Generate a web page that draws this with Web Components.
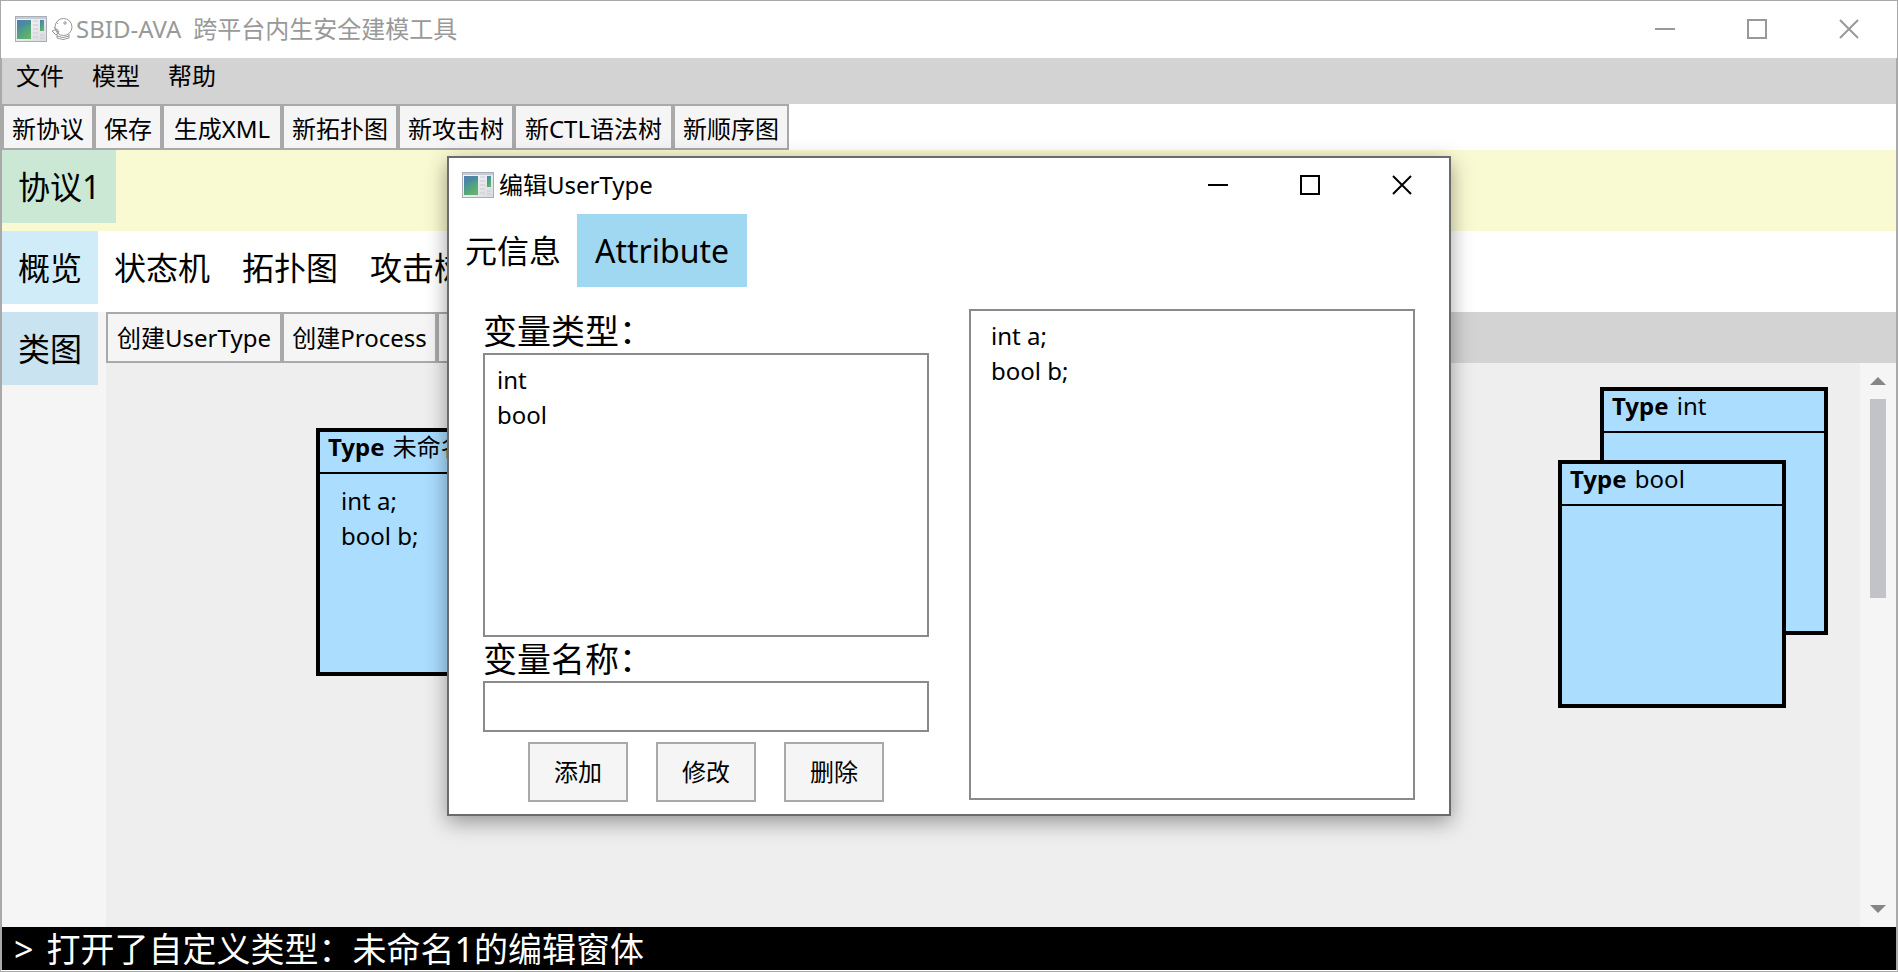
<!DOCTYPE html>
<html lang="zh-CN">
<head>
<meta charset="utf-8">
<title>SBID-AVA</title>
<style>
html,body{margin:0;height:100%}
body{font-family:"Noto Sans","Noto Sans CJK SC",sans-serif;color:#000;background:#fff;overflow:hidden}
</style>
</head>
<body>
<sbid-app></sbid-app>
<script>
const define = (name, html, setup) => {
  const t = document.createElement('template');
  t.innerHTML = html;
  customElements.define(name, class extends HTMLElement {
    constructor() {
      super();
      this.attachShadow({mode: 'open'}).append(t.content.cloneNode(true));
    }
    connectedCallback() { if (setup) setup(this, this.shadowRoot); }
  });
};

/* Window caption: application icon, title, and the three system buttons */
define('win-caption', `
<style>
:host{display:flex;align-items:center;flex:none;background:#fff;color:var(--caption,#000);font-size:24px;line-height:32px}
.app{flex:none;margin-right:5px}
.title{flex:1;display:flex;align-items:center;white-space:nowrap}
.controls{display:flex}
button{border:0;padding:0;margin:0;background:none;color:inherit;width:92px;height:48px;display:grid;place-items:center}
.controls svg{display:block}
</style>
<svg class="app" width="32" height="26" viewBox="0 0 32 26" aria-hidden="true">
<defs>
<linearGradient id="f" x1="0" y1="0" x2="1" y2="1"><stop offset="0" stop-color="#fbfbfc"/><stop offset="1" stop-color="#d9dadf"/></linearGradient>
<linearGradient id="g" x1="0" y1="0" x2=".6" y2="1"><stop offset="0" stop-color="#4a7fb0"/><stop offset=".5" stop-color="#4c9a8c"/><stop offset="1" stop-color="#62b36c"/></linearGradient>
</defs>
<rect x=".5" y=".5" width="31" height="25" fill="url(#f)" stroke="#a9adb8"/>
<path d="M1 2h30" stroke="#c6cbd6" stroke-width="2"/>
<rect x="2" y="4" width="14" height="19" fill="url(#g)"/>
<path d="M2 14Q7 9 16 8V4H2z" fill="#4f80ad" opacity=".5"/>
<path d="M18 5h5M18 9h5M18 13h5M18 17h5M18 21h5M25 19h4M25 22h4" stroke="#c9cbd0"/>
<rect x="25" y="4" width="4" height="11" fill="url(#g)"/>
</svg>
<div class="title"><slot></slot></div>
<div class="controls">
<button aria-label="最小化"><svg width="20" height="20"><path d="M0 10h20" stroke="currentColor" stroke-width="2"/></svg></button>
<button aria-label="最大化"><svg width="20" height="20"><rect x="1" y="1" width="18" height="18" fill="none" stroke="currentColor" stroke-width="2"/></svg></button>
<button aria-label="关闭"><svg width="20" height="20"><path d="M1 1L19 19M19 1L1 19" stroke="currentColor" stroke-width="2"/></svg></button>
</div>`);

define('menu-bar', `
<style>
:host{display:flex;flex:none;gap:28px;height:46px;padding-left:14px;background:#d3d3d3}
button{border:0;padding:0;background:none;font:24px/34px "Noto Sans CJK SC",sans-serif;align-self:flex-start;color:#000}
</style>
<button>文件</button><button>模型</button><button>帮助</button>`);

/* Row of flat grey-bordered buttons: "label" or "label:min-width", separated by "|" */
define('tool-bar', `
<style>
:host{display:flex;flex:none;height:var(--h,46px)}
button{box-sizing:border-box;border:2px solid #a9a9a9;border-radius:0;background:#f5f5f5;color:#000;font:inherit;font-size:24px;line-height:32px;padding:var(--p,4px 8px 0);white-space:nowrap}
</style>`, (el, root) => {
  for (const s of el.getAttribute('items').split('|')) {
    const [label, width] = s.split(':');
    const b = document.createElement('button');
    b.textContent = label;
    if (width) b.style.minWidth = width + 'px';
    root.append(b);
  }
});

define('tab-item', `
<style>
:host{display:block;flex:none}
button{display:block;box-sizing:border-box;width:100%;height:73px;padding:0 16px;border:0;background:var(--tab,none);font:inherit;font-size:32px;line-height:72px;color:#000;white-space:nowrap}
</style>
<button role="tab"><slot></slot></button>`);

define('type-node', `
<style>
:host{position:absolute;box-sizing:border-box;width:228px;height:248px;border:4px solid #000;background:#aaddff;font-size:24px;line-height:35px}
header{height:40px;border-bottom:2px solid #000;padding-left:8px;line-height:30px;white-space:nowrap}
b{margin-right:2px}
.body{padding:9px 21px}
</style>
<header><b>Type</b> <slot name="name"></slot></header>
<div class="body"><slot></slot></div>`);

define('scroll-strip', `
<style>
:host{display:flex;flex-direction:column;align-items:center;flex:none;box-sizing:border-box;width:36px;padding:14px 0;background:#f5f5f5}
.thumb{width:16px;height:199px;margin-top:14px;background:#c2c3c9}
.down{margin-top:auto}
svg{display:block;flex:none}
</style>
<svg width="16" height="8"><path d="M0 8L8 0L16 8z" fill="#868686"/></svg>
<div class="thumb"></div>
<svg class="down" width="16" height="8"><path d="M0 0L8 8L16 0z" fill="#868686"/></svg>`);

define('item-list', `
<style>
:host{display:block;box-sizing:border-box;border:2px solid #8a8a8a;background:#fff}
ul{list-style:none;margin:0;padding:var(--pad,7px 12px);font-size:24px;line-height:35px}
</style>
<ul></ul>`, (el, root) => {
  for (const s of el.getAttribute('items').split('|')) {
    const li = document.createElement('li');
    li.textContent = s;
    root.querySelector('ul').append(li);
  }
});

define('edit-dialog', `
<style>
:host{position:absolute;top:155px;left:50%;transform:translateX(-50%);box-sizing:border-box;width:1004px;max-width:100%;height:660px;border:2px solid #6b6b6b;background:#fff;box-shadow:0 6px 20px rgba(0,0,0,.38);display:flex;flex-direction:column}
win-caption{box-sizing:border-box;height:56px;padding:0 1px 2px 13px}
nav{display:flex;flex:none;height:95px}
.on{--tab:#a1d8f1;min-width:170px}
form{flex:1;display:grid;grid-template-columns:1fr 1fr;gap:40px;padding:0 34px 14px;margin:0;min-height:0}
.left{display:flex;flex-direction:column;min-height:0}
label,.label{font-size:34px;line-height:44px;height:44px;flex:none}
.left item-list{height:284px;flex:none}
input{box-sizing:border-box;flex:none;width:100%;height:51px;border:2px solid #8a8a8a;border-radius:0;background:#fff;font:inherit;font-size:24px;padding:0 8px;outline:0}
.actions{display:flex;justify-content:center;gap:28px;margin-top:10px}
.actions button{box-sizing:border-box;flex:none;width:100px;height:60px;border:2px solid #a9a9a9;border-radius:0;background:#f5f5f5;font:inherit;font-size:24px;line-height:32px;color:#000;padding:0}
.right{--pad:7px 20px}
</style>
<win-caption>编辑UserType</win-caption>
<nav role="tablist"><tab-item>元信息</tab-item><tab-item class="on">Attribute</tab-item></nav>
<form>
<div class="left">
<div class="label">变量类型：</div>
<item-list items="int|bool"></item-list>
<label for="name">变量名称：</label>
<input id="name" type="text">
<div class="actions"><button type="button">添加</button><button type="button">修改</button><button type="button">删除</button></div>
</div>
<item-list class="right" items="int a;|bool b;"></item-list>
</form>`);

define('sbid-app', `
<style>
:host{position:relative;display:flex;flex-direction:column;box-sizing:border-box;height:100vh;border:1px solid #a9a9a9;background:#fff}
.caption{--caption:#999;box-sizing:border-box;height:57px;padding:0 2px 2px 14px}
.mark{flex:none;margin-right:2px}
.product{margin-right:12px}
.client{flex:1;display:flex;flex-direction:column;min-height:0;margin-bottom:1px;border:0 solid #a9a9a9;border-width:0 1px}
.docs,.views{display:flex;flex:none;height:81px}
.docs{background:#fafad2}
.docs tab-item{--tab:#cbe8d5}
.views .on{--tab:#d1ecf9}
.work{flex:1;display:flex;min-height:0}
aside{flex:none;width:104px;background:#f5f5f5}
aside tab-item{--tab:#c9e4f0;width:96px}
main{flex:1;display:flex;flex-direction:column;min-width:0}
main tool-bar{--h:51px;--p:0 8px;background:#d3d3d3}
.view{flex:1;display:flex;min-height:0}
.canvas{position:relative;flex:1;background:#eee;overflow:hidden}
footer{display:flex;gap:13px;flex:none;box-sizing:border-box;height:43px;padding:2px 0 0 12px;background:#000;color:#fff;font-size:34px;line-height:41px;white-space:nowrap}
</style>
<win-caption class="caption"><svg class="mark" width="22" height="24" viewBox="0 0 22 24" fill="none" stroke="#999" aria-hidden="true"><circle cx="11.500" cy="10" r="8.500"/><path d="M5 17v4q6 3 12 0v-4M5 19q6 3 12 0M0 14l5-2 2 3-3 3zM2 10l4 5M13 4v4M11 6h4M4 5l2 2"/></svg><span class="product">SBID-AVA</span><span>跨平台内生安全建模工具</span></win-caption>
<div class="client">
<menu-bar></menu-bar>
<tool-bar items="新协议|保存|生成XML:120|新拓扑图|新攻击树|新CTL语法树:159|新顺序图"></tool-bar>
<div class="docs" role="tablist"><tab-item>协议1</tab-item></div>
<div class="views" role="tablist"><tab-item class="on">概览</tab-item><tab-item>状态机</tab-item><tab-item>拓扑图</tab-item><tab-item>攻击树</tab-item></div>
<div class="work">
<aside><tab-item>类图</tab-item></aside>
<main>
<tool-bar items="创建UserType:176|创建Process:155|创建"></tool-bar>
<div class="view">
<div class="canvas">
<type-node style="left:210px;top:65px"><span slot="name">未命名1</span>int a;<br>bool b;</type-node>
<type-node style="left:1494px;top:24px"><span slot="name">int</span></type-node>
<type-node style="left:1452px;top:97px"><span slot="name">bool</span></type-node>
</div>
<scroll-strip></scroll-strip>
</div>
</main>
</div>
<footer><span>&gt;</span><span>打开了自定义类型：未命名1的编辑窗体</span></footer>
</div>
<edit-dialog></edit-dialog>`);
</script>
</body>
</html>
